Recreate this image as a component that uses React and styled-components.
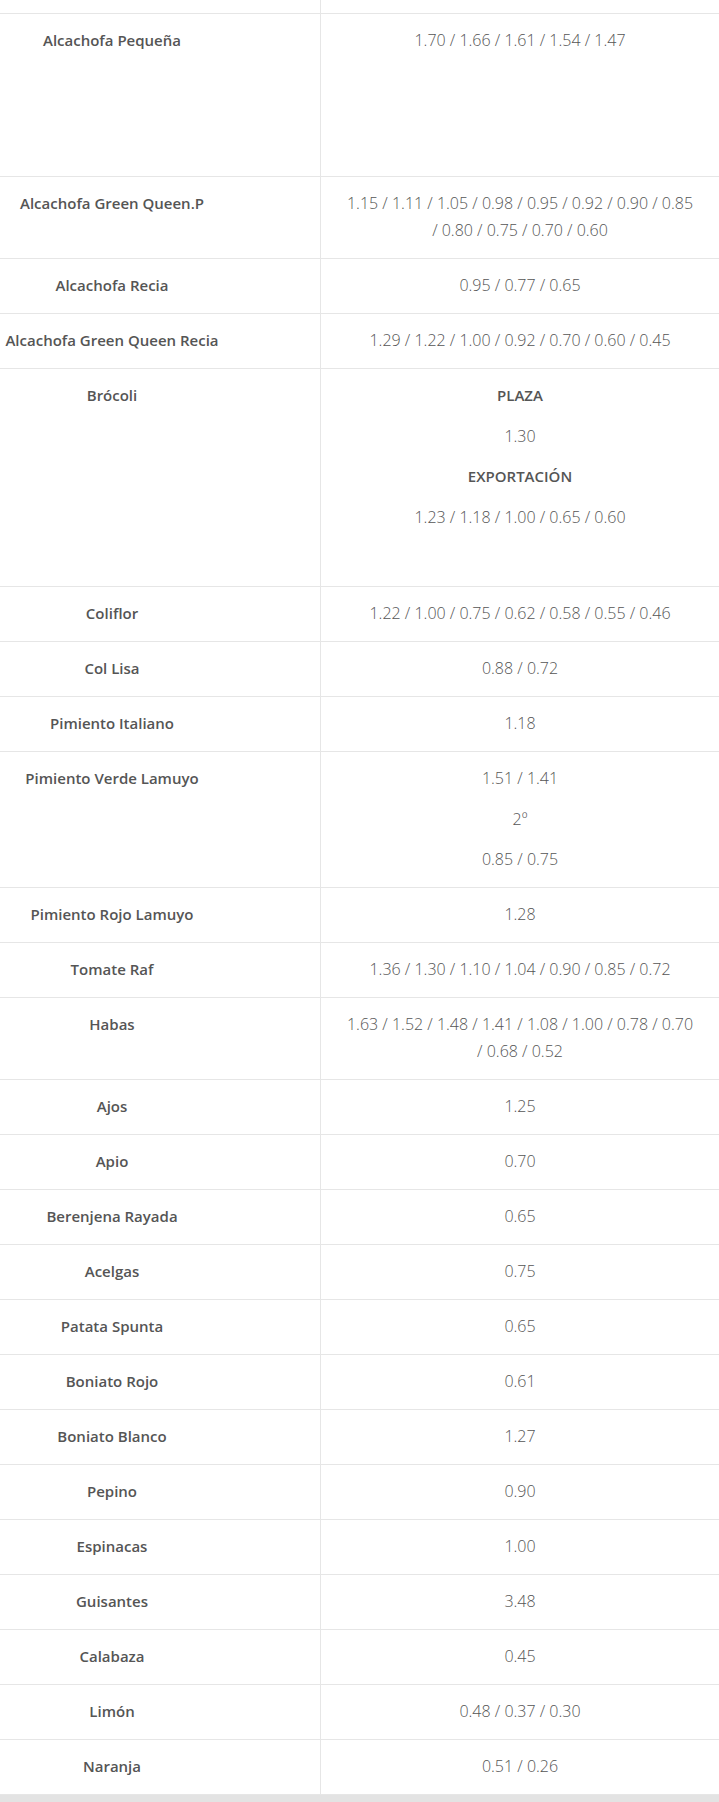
import React from 'react'
import styled, { createGlobalStyle } from 'styled-components'

const GlobalStyle = createGlobalStyle`
  html, body {
    margin: 0;
    padding: 0;
    background: #fff;
  }
  body {
    font-family: "Open Sans", "Liberation Sans", sans-serif;
    font-size: 16px;
    color: #555;
  }
`

const prices = [
  { name: 'Alcachofa Pequeña', values: ['1.70 / 1.66 / 1.61 / 1.54 / 1.47'], minHeight: 162 },
  { name: 'Alcachofa Green Queen.P', values: ['1.15 / 1.11 / 1.05 / 0.98 / 0.95 / 0.92 / 0.90 / 0.85 / 0.80 / 0.75 / 0.70 / 0.60'] },
  { name: 'Alcachofa Recia', values: ['0.95 / 0.77 / 0.65'] },
  { name: 'Alcachofa Green Queen Recia', values: ['1.29 / 1.22 / 1.00 / 0.92 / 0.70 / 0.60 / 0.45'] },
  {
    name: 'Brócoli',
    values: [
      { label: 'PLAZA' },
      '1.30',
      { label: 'EXPORTACIÓN' },
      '1.23 / 1.18 / 1.00 / 0.65 / 0.60',
    ],
    minHeight: 217,
  },
  { name: 'Coliflor', values: ['1.22 / 1.00 / 0.75 / 0.62 / 0.58 / 0.55 / 0.46'] },
  { name: 'Col Lisa', values: ['0.88 / 0.72'] },
  { name: 'Pimiento Italiano', values: ['1.18'] },
  { name: 'Pimiento Verde Lamuyo', values: ['1.51 / 1.41', '2º', '0.85 / 0.75'] },
  { name: 'Pimiento Rojo Lamuyo', values: ['1.28'] },
  { name: 'Tomate Raf', values: ['1.36 / 1.30 / 1.10 / 1.04 / 0.90 / 0.85 / 0.72'] },
  { name: 'Habas', values: ['1.63 / 1.52 / 1.48 / 1.41 / 1.08 / 1.00 / 0.78 / 0.70 / 0.68 / 0.52'] },
  { name: 'Ajos', values: ['1.25'] },
  { name: 'Apio', values: ['0.70'] },
  { name: 'Berenjena Rayada', values: ['0.65'] },
  { name: 'Acelgas', values: ['0.75'] },
  { name: 'Patata Spunta', values: ['0.65'] },
  { name: 'Boniato Rojo', values: ['0.61'] },
  { name: 'Boniato Blanco', values: ['1.27'] },
  { name: 'Pepino', values: ['0.90'] },
  { name: 'Espinacas', values: ['1.00'] },
  { name: 'Guisantes', values: ['3.48'] },
  { name: 'Calabaza', values: ['0.45'] },
  { name: 'Limón', values: ['0.48 / 0.37 / 0.30'] },
  { name: 'Naranja', values: ['0.51 / 0.26'] },
]

export default function App() {
  return (
    <>
      <GlobalStyle />
      <PriceTable>
        <Row>
          <NameCell $stub />
          <ValueCell $stub />
        </Row>
        {prices.map((item) => (
          <Row key={item.name}>
            <NameCell>{item.name}</NameCell>
            <ValueCell $minHeight={item.minHeight}>
              {item.values.map((v, i) =>
                typeof v === 'string'
                  ? <Line key={i}>{v}</Line>
                  : <Label key={i}>{v.label}</Label>
              )}
            </ValueCell>
          </Row>
        ))}
        <BottomBar />
      </PriceTable>
    </>
  )
}

const PriceTable = styled.div`
  width: 719px;
  display: flex;
  flex-direction: column;
`

const Row = styled.div`
  display: grid;
  grid-template-columns: 321px 1fr;
  border-bottom: 1px solid #e6e6e6;
`

const NameCell = styled.div`
  box-sizing: border-box;
  height: ${(props) => (props.$stub ? '13px' : 'auto')};
  padding: ${(props) => (props.$stub ? '0' : '13px 96px 14px 0')};
  border-right: 1px solid #e6e6e6;
  text-align: center;
  font-weight: 600;
  font-size: 15px;
  line-height: 27px;
  color: #555;
`

const ValueCell = styled.div`
  box-sizing: border-box;
  height: ${(props) => (props.$stub ? '13px' : 'auto')};
  min-height: ${(props) => (props.$minHeight ? `${props.$minHeight}px` : '0')};
  padding: ${(props) => (props.$stub ? '0' : '13px 22px 14px')};
  display: flex;
  flex-direction: column;
  gap: 13.5px;
  text-align: center;
  font-weight: 300;
  font-size: 16px;
  line-height: 27px;
  color: #555;
`

const Line = styled.div``

const Label = styled.div`
  font-weight: 600;
  font-size: 15px;
`

const BottomBar = styled.div`
  height: 8px;
  background: #e3e3e3;
`
